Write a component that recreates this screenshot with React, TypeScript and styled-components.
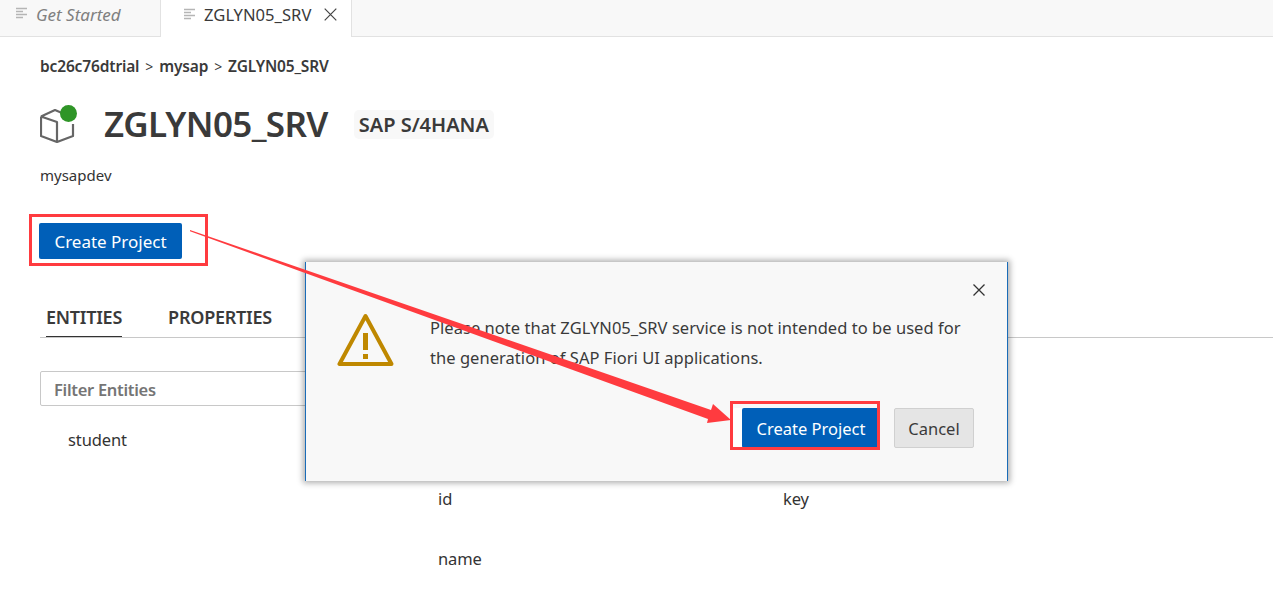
import { createGlobalStyle, styled } from "styled-components";

const GlobalStyle = createGlobalStyle`
  html, body {
    margin: 0;
    padding: 0;
    height: 612px;
    overflow: hidden;
    background: #fff;
    font-family: "Noto Sans", "Open Sans", sans-serif;
    color: #333;
  }
  * { box-sizing: border-box; }
`;

const Page = styled.div`
  position: relative;
  width: 1273px;
  height: 612px;
  overflow: hidden;
`;

const TabBar = styled.div`
  display: flex;
  height: 37px;
  background: #f8f8f8;
  border-bottom: 1px solid #e2e2e2;
`;

const Tab = styled.div<{ $active?: boolean }>`
  display: flex;
  align-items: center;
  height: ${(p) => (p.$active ? "37px" : "36px")};
  width: ${(p) => (p.$active ? "191px" : "161px")};
  padding: 0 0 8px ${(p) => (p.$active ? "23px" : "16px")};
  gap: ${(p) => (p.$active ? "8px" : "8px")};
  background: ${(p) => (p.$active ? "#fff" : "transparent")};
  border-right: 1px solid #e2e2e2;
  font-size: ${(p) => (p.$active ? "16.6px" : "17px")};
  font-style: ${(p) => (p.$active ? "normal" : "italic")};
  color: ${(p) => (p.$active ? "#3a3a3a" : "#808080")};
`;

const CloseX = styled.svg`
  margin-left: 5px;
  flex: none;
`;

const Content = styled.div`
  padding: 19px 0 0 40px;
`;

const Crumbs = styled.div`
  display: flex;
  align-items: center;
  height: 20px;
  font-size: 15.5px;
  font-weight: 600;
  letter-spacing: -0.15px;
  gap: 6px;
  color: #3a3a3a;
`;

const Sep = styled.span`
  font-weight: 400;
  font-size: 14px;
`;

const TitleRow = styled.div`
  display: flex;
  align-items: center;
  height: 50px;
  margin-top: 23px;
`;

const CubeWrap = styled.div`
  position: relative;
  width: 38px;
  height: 38px;
  margin-right: 26px;
  flex: none;
`;

const Dot = styled.span`
  position: absolute;
  left: 20px;
  top: 0;
  width: 17px;
  height: 17px;
  border-radius: 50%;
  background: #2f9527;
`;

const Title = styled.h1`
  margin: 0;
  font-size: 35px;
  font-weight: 600;
  letter-spacing: -0.65px;
  color: #3a3a3a;
  line-height: 50px;
`;

const Badge = styled.span`
  margin-left: 26px;
  padding: 0 5px;
  height: 29px;
  line-height: 29px;
  border-radius: 5px;
  background: #f8f8f8;
  font-size: 20px;
  font-weight: 600;
  color: #3a3a3a;
`;

const Sub = styled.div`
  margin-top: 16px;
  height: 20px;
  line-height: 20px;
  font-size: 15px;
`;

const PrimaryButton = styled.button`
  display: block;
  border: none;
  border-radius: 2px;
  background: #005fb8;
  color: #fff;
  font-family: inherit;
  padding: 0;
`;

const PageButton = styled(PrimaryButton)`
  width: 143px;
  height: 36px;
  margin: 38px 0 0 -1px;
  font-size: 17px;
`;

const TabsRow = styled.div`
  display: flex;
  gap: 46px;
  margin: 42px 0 0 0;
  height: 37px;
  width: 1233px;
  border-bottom: 1px solid #c8c8c8;
  padding-left: 6px;
`;

const SectionTab = styled.div<{ $active?: boolean }>`
  height: 36px;
  line-height: 32px;
  font-size: 18px;
  font-weight: 600;
  letter-spacing: -0.25px;
  color: #3a3a3a;
  border-bottom: ${(p) => (p.$active ? "1px solid #333" : "none")};
`;

const FilterInput = styled.div`
  margin-top: 33px;
  width: 480px;
  height: 35px;
  border: 1px solid #c8c8c8;
  border-radius: 2px;
  padding-left: 13px;
  line-height: 35px;
  font-size: 16.5px;
  font-weight: 600;
  letter-spacing: -0.3px;
  color: #757575;
`;

const Lower = styled.div`
  display: flex;
`;

const EntityList = styled.div`
  width: 398px;
  padding: 23px 0 0 28px;
  font-size: 16.5px;
  letter-spacing: -0.1px;
  line-height: 22px;
  flex: none;
`;

const PropTable = styled.div`
  display: grid;
  grid-template-columns: 345px 200px;
  grid-auto-rows: 60px;
  padding-top: 63px;
  font-size: 16.5px;
  letter-spacing: -0.1px;
  line-height: 60px;
`;

const Dialog = styled.div`
  position: absolute;
  left: 305px;
  top: 262px;
  width: 703px;
  height: 219px;
  background: #f8f8f8;
  border-left: 1px solid #1a6cb8;
  border-right: 1px solid #1a6cb8;
  box-shadow: 0 0 6px 2px rgba(0, 0, 0, 0.32);
  padding: 45px 0 0 31px;
`;

const DialogClose = styled.svg`
  position: absolute;
  right: 21px;
  top: 21px;
`;

const DialogBody = styled.div`
  display: flex;
  gap: 36px;
`;

const WarningIcon = styled.svg`
  flex: none;
  margin-top: 6px;
`;

const DialogText = styled.p`
  margin: 6px 0 0;
  width: 545px;
  font-size: 16.5px;
  letter-spacing: 0.04px;
  line-height: 30px;
  color: #3a3a3a;
`;

const DialogActions = styled.div`
  position: absolute;
  right: 33px;
  top: 146px;
  display: flex;
  gap: 16px;
`;

const DialogPrimary = styled(PrimaryButton)`
  width: 136px;
  height: 40px;
  padding-left: 2px;
  border-radius: 2px 0 0 2px;
  font-size: 16.5px;
  box-shadow: -9px 0 0 #fff;
`;

const CancelButton = styled.button`
  width: 80px;
  height: 40px;
  border: 1px solid #d0d0d0;
  border-radius: 2px;
  background: #e5e5e5;
  color: #3a3a3a;
  font-family: inherit;
  font-size: 16.5px;
  padding: 0;
`;

const RedBox = styled.div<{ $x: number; $y: number; $w: number; $h: number }>`
  position: absolute;
  left: ${(p) => p.$x}px;
  top: ${(p) => p.$y}px;
  width: ${(p) => p.$w}px;
  height: ${(p) => p.$h}px;
  border: 3px solid #ff3b3f;
  pointer-events: none;
`;

const Annotation = styled.svg`
  position: absolute;
  left: 0;
  top: 0;
  pointer-events: none;
`;

const DocGlyph = styled.svg`
  flex: none;
`;

function DocIcon() {
  return (
    <DocGlyph width="12" height="14" viewBox="0 0 12 14" fill="none">
      <path d="M0 1.5h11M0 4.5h7M0 7.5h11M0 10.5h7" stroke="#b5b5b5" strokeWidth="1.4" />
    </DocGlyph>
  );
}

export default function App() {
  return (
    <Page>
      <GlobalStyle />
      <TabBar>
        <Tab>
          <DocIcon />
          Get Started
        </Tab>
        <Tab $active>
          <DocIcon />
          ZGLYN05_SRV
          <CloseX width="13" height="13" viewBox="0 0 13 13">
            <path d="M.7.7l11.600 11.600M12.300.7L.7 12.300" stroke="#444" strokeWidth="1.2" fill="none" />
          </CloseX>
        </Tab>
      </TabBar>

      <Content>
        <Crumbs>
          bc26c76dtrial <Sep>&gt;</Sep> mysap <Sep>&gt;</Sep> ZGLYN05_SRV
        </Crumbs>
        <TitleRow>
          <CubeWrap>
            <svg width="38" height="38" viewBox="0 0 38 38" fill="none">
              <path
                d="M1 11.5L15 5l7 3M1 11.5V31l16 6 16-6V19M1 11.5L17 17v20"
                stroke="#666"
                strokeWidth="2.2"
                strokeLinejoin="round"
              />
            </svg>
            <Dot />
          </CubeWrap>
          <Title>ZGLYN05_SRV</Title>
          <Badge>SAP S/4HANA</Badge>
        </TitleRow>
        <Sub>mysapdev</Sub>
        <PageButton>Create Project</PageButton>
        <TabsRow>
          <SectionTab $active>ENTITIES</SectionTab>
          <SectionTab>PROPERTIES</SectionTab>
        </TabsRow>
        <FilterInput>Filter Entities</FilterInput>
        <Lower>
          <EntityList>student</EntityList>
          <PropTable>
            <span>id</span>
            <span>key</span>
            <span>name</span>
          </PropTable>
        </Lower>
      </Content>

      <Dialog>
        <DialogClose width="14" height="14" viewBox="0 0 14 14">
          <path d="M1.5 1.5l11 11M12.5 1.5l-11 11" stroke="#333" strokeWidth="1.3" fill="none" />
        </DialogClose>
        <DialogBody>
          <WarningIcon width="57" height="54" viewBox="0 0 57 54">
            <path d="M28.500 3L2.500 51h52z" fill="none" stroke="#bf8800" strokeWidth="4" strokeLinejoin="round" />
            <path d="M26 20h5v17h-5zM26 41h5v5h-5z" fill="#bf8800" />
          </WarningIcon>
          <DialogText>
            Please note that ZGLYN05_SRV service is not intended to be used for the generation of SAP Fiori UI
            applications.
          </DialogText>
        </DialogBody>
        <DialogActions>
          <DialogPrimary>Create Project</DialogPrimary>
          <CancelButton>Cancel</CancelButton>
        </DialogActions>
      </Dialog>

      <RedBox $x={29} $y={214} $w={179} $h={52} />
      <RedBox $x={730} $y={401} $w={150} $h={49} />
      <Annotation width="1273" height="612" viewBox="0 0 1273 612">
        <path d="M190 230L190 231.200L708 419L707 423L731 420L713 404L711 410Z" fill="#ff3b3f" />
      </Annotation>
    </Page>
  );
}
